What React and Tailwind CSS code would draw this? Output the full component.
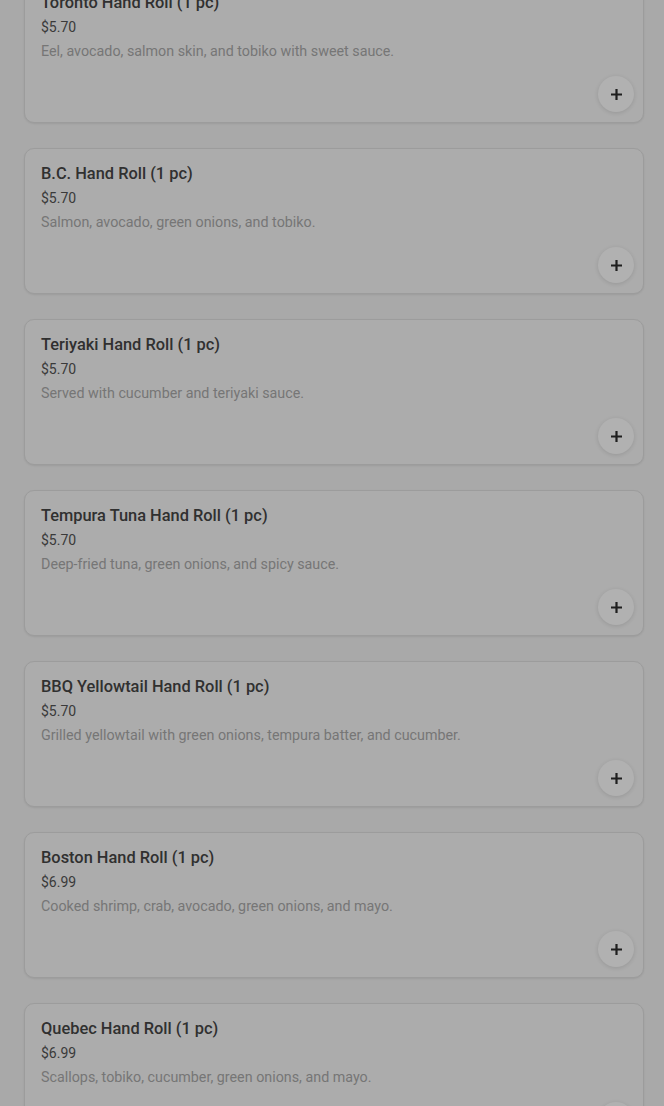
const items = [
  { name: "Toronto Hand Roll (1 pc)", price: "$5.70", desc: "Eel, avocado, salmon skin, and tobiko with sweet sauce." },
  { name: "B.C. Hand Roll (1 pc)", price: "$5.70", desc: "Salmon, avocado, green onions, and tobiko." },
  { name: "Teriyaki Hand Roll (1 pc)", price: "$5.70", desc: "Served with cucumber and teriyaki sauce." },
  { name: "Tempura Tuna Hand Roll (1 pc)", price: "$5.70", desc: "Deep-fried tuna, green onions, and spicy sauce." },
  { name: "BBQ Yellowtail Hand Roll (1 pc)", price: "$5.70", desc: "Grilled yellowtail with green onions, tempura batter, and cucumber." },
  { name: "Boston Hand Roll (1 pc)", price: "$6.99", desc: "Cooked shrimp, crab, avocado, green onions, and mayo." },
  { name: "Quebec Hand Roll (1 pc)", price: "$6.99", desc: "Scallops, tobiko, cucumber, green onions, and mayo." },
];

function PlusIcon() {
  return (
    <svg width="13" height="13" viewBox="0 0 13 13">
      <path d="M6.5 1v11M1 6.5h11" stroke="#1f1f1f" strokeWidth="2.2" />
    </svg>
  );
}

function ItemCard({ item }) {
  return (
    <div className="flex flex-col rounded-[10px] border border-[#9c9c9c] bg-[#acacac] px-4 pt-[13px] pb-[10px] shadow-[0_1px_2px_rgba(0,0,0,0.08)]">
      <div className="text-[16.4px] leading-6 font-medium text-[#303030]">{item.name}</div>
      <div className="mt-[2px] text-[14px] leading-5 text-[#3a3a3a]">{item.price}</div>
      <div className="mt-1 text-[14.3px] leading-5 text-[#767676]">{item.desc}</div>
      <div className="mt-[15px] flex justify-end -mr-[7px]">
        <button className="flex h-9 w-9 items-center justify-center rounded-full bg-[#b1b1b1] shadow-[0_1px_4px_rgba(0,0,0,0.12)]">
          <PlusIcon />
        </button>
      </div>
    </div>
  );
}

export default function App() {
  return (
    <div
      className="h-[1106px] overflow-hidden bg-[#a9a9a9]"
      style={{ fontFamily: "Roboto, 'Noto Sans', sans-serif" }}
    >
      <div className="mt-[-23px] flex flex-col gap-[25px] pl-6 pr-[20px]">
        {items.map((item) => (
          <ItemCard key={item.name} item={item} />
        ))}
      </div>
    </div>
  );
}
